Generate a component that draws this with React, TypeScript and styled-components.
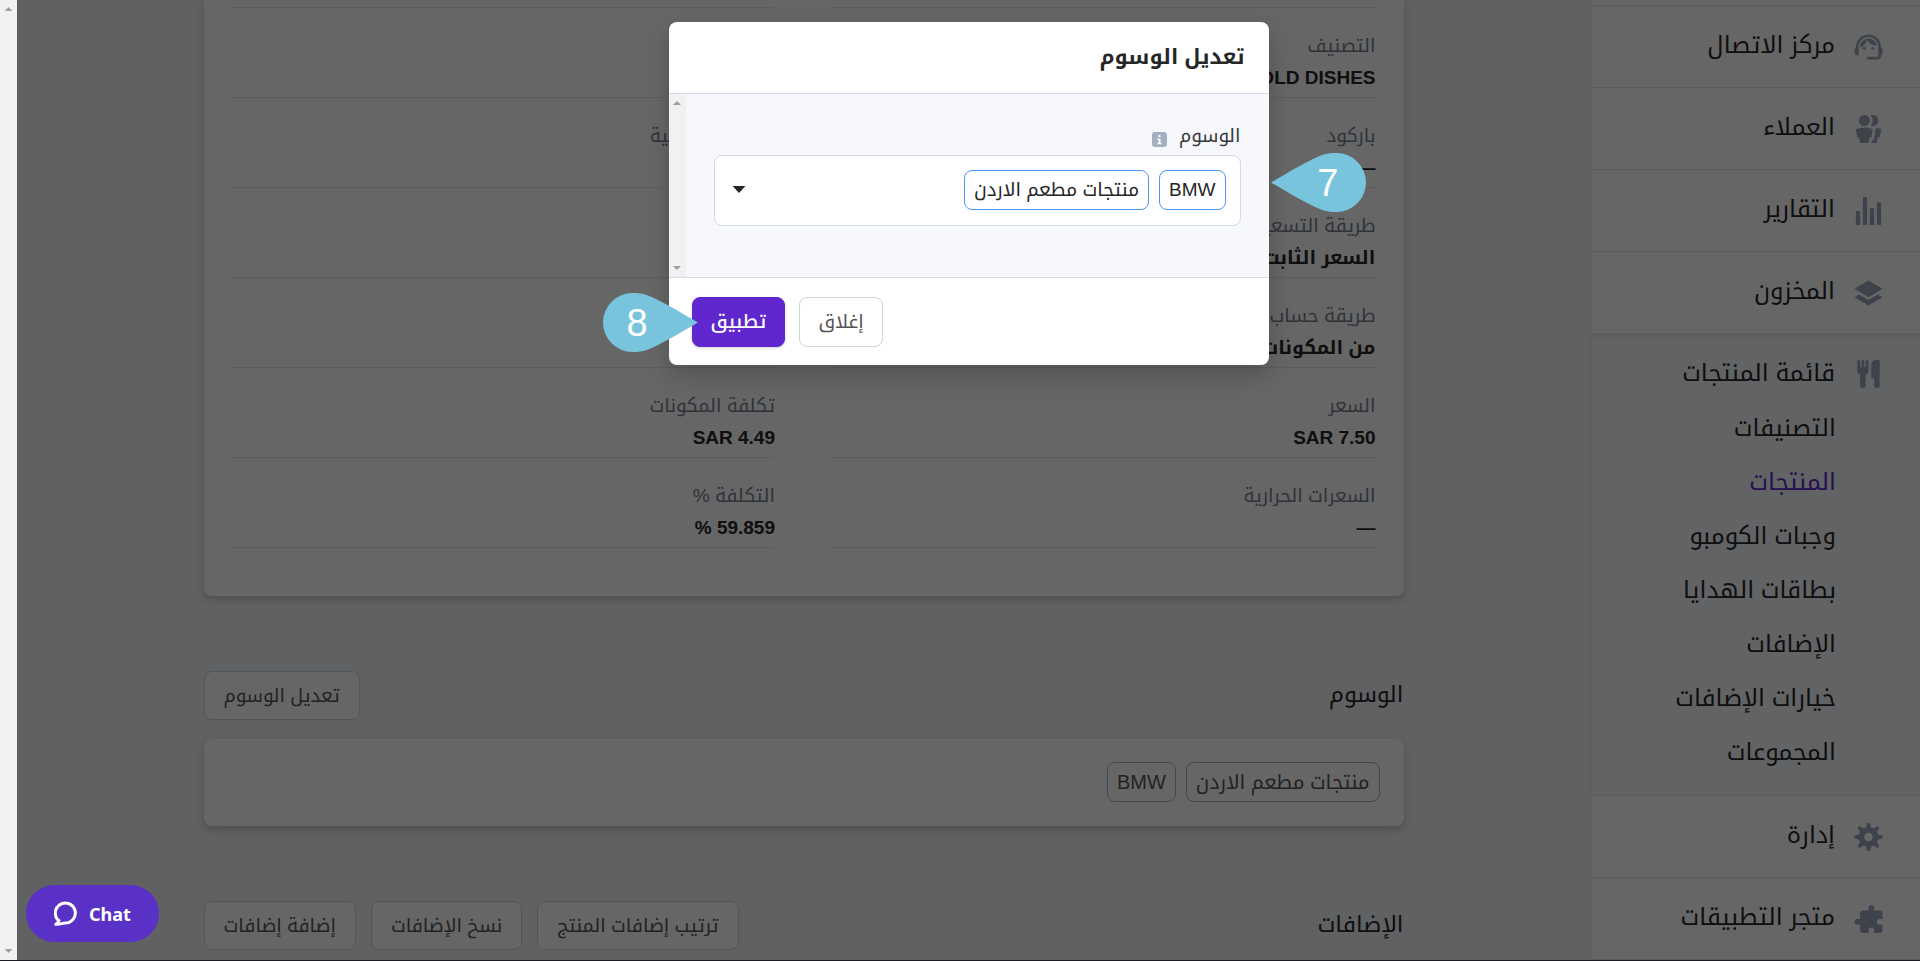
import React from 'react';
import styled, { createGlobalStyle, css } from 'styled-components';

const arabic = `"Liberation Sans", "Noto Kufi Arabic", "DejaVu Sans", sans-serif`;

const GlobalStyle = createGlobalStyle`
  *, *::before, *::after { box-sizing: border-box; }
  body {
    margin: 0;
    background: #f0f2f6;
    color: #262626;
    font-family: ${arabic};
    font-size: 19px;
    line-height: 32px;
  }
  button { font: inherit; cursor: pointer; }
  h2, dl, dd, dt, ul { margin: 0; padding: 0; font-weight: 400; }
  ul { list-style: none; }
  a { color: inherit; text-decoration: none; }
`;

/* ---------- page frame ---------- */

const Page = styled.div`
  position: relative;
  display: flex;
  height: 100vh;
  overflow: hidden;
  border-bottom: 1px solid #1c1a22;
`;

const Sidebar = styled.nav`
  flex: 0 0 330px;
  background: #fff;
  border-left: 1px solid #e2e5ec;
`;

const Main = styled.main`
  flex: 1;
  min-width: 0;
  display: flex;
  flex-direction: column;
  align-items: center;
`;

const Content = styled.div`
  width: 100%;
  max-width: 1200px;
`;

const ScrollTrack = styled.div`
  flex: 0 0 17px;
  display: flex;
  flex-direction: column;
  justify-content: space-between;
  align-items: center;
  padding: 7px 0;
  background: #f1f1f1;
`;

const ScrollArrow = styled.span<{ $down?: boolean }>`
  width: 8px;
  height: 4px;
  background: #a0a0a0;
  clip-path: ${p => (p.$down ? 'polygon(0 0, 100% 0, 50% 100%)' : 'polygon(50% 0, 100% 100%, 0 100%)')};
`;

/* ---------- sidebar ---------- */

const MenuEdge = styled.div`
  height: 6px;
  border-bottom: 1px solid #e6e8ed;
`;

const MenuLink = styled.a<{ $open?: boolean }>`
  display: flex;
  align-items: center;
  gap: 19px;
  padding: 0 37px;
  height: 82px;
  font-size: 24px;
  white-space: nowrap;
  border-bottom: 1px solid #e6e8ed;
  ${p => p.$open && css`
    height: 54px;
    border-bottom: 0;
  `}
`;

const MenuText = styled.span`
  padding-bottom: 3px;
`;

const MenuIcon = styled.svg`
  width: 29px;
  height: 28px;
  fill: #98a6bc;
`;

const MenuGroup = styled.div`
  padding: 13px 0 16px;
  background: #f5f7fa;
  border-bottom: 1px solid #e6e8ed;
  box-shadow: inset 0 4px 6px -2px rgba(0, 0, 0, 0.08);
`;

const SubLink = styled.a<{ $active?: boolean }>`
  display: flex;
  align-items: center;
  height: 54px;
  padding-right: 84px;
  font-size: 24px;
  white-space: nowrap;
  color: ${p => (p.$active ? '#5f28cd' : 'inherit')};
`;

/* ---------- content ---------- */

const Card = styled.section<{ $cut?: boolean }>`
  background: #fff;
  border-radius: ${p => (p.$cut ? '0 0 8px 8px' : '8px')};
  box-shadow: 0 4px 8px rgba(40, 45, 60, 0.22);
`;

const Details = styled(Card)`
  display: grid;
  grid-template-columns: 1fr 1fr;
  column-gap: 57px;
  padding: 7px 28px 48px;
`;

const FieldColumn = styled.dl`
  border-top: 1px solid #e6e8ed;
`;

const Field = styled.div`
  height: 90px;
  padding-top: 22px;
  border-bottom: 1px solid #e6e8ed;
`;

const FieldLabel = styled.dt`
  color: #768092;
`;

const FieldValue = styled.dd`
  font-weight: 700;
`;

const SectionHead = styled.header`
  display: flex;
  align-items: center;
  justify-content: space-between;
  margin: 75px 0 19px;
`;

const SectionTitle = styled.h2`
  padding-bottom: 4px;
  font-size: 23px;
`;

const Actions = styled.div`
  display: flex;
  gap: 15px;
`;

const Button = styled.button<{ $primary?: boolean }>`
  min-height: 49px;
  padding: 0 19px;
  border: 1px solid ${p => (p.$primary ? '#5f27cd' : '#cbd5e0')};
  border-radius: 8px;
  background: ${p => (p.$primary ? '#5f27cd' : '#fff')};
  color: ${p => (p.$primary ? '#fff' : '#555')};
  font-weight: ${p => (p.$primary ? 500 : 400)};
  ${p => p.$primary && css`
    box-shadow: 0 1px 3px rgba(0, 0, 0, 0.2);
  `}
`;

const TagCard = styled(Card)`
  display: flex;
  gap: 10px;
  padding: 23px 24px 24px;
`;

const Tag = styled.span<{ $selected?: boolean }>`
  height: 40px;
  line-height: 38px;
  padding: 0 9px;
  border: 1px solid ${p => (p.$selected ? '#4c97f5' : '#a0aec8')};
  border-radius: 8px;
  color: ${p => (p.$selected ? '#262626' : '#555')};
  font-size: ${p => (p.$selected ? '19px' : '20px')};
`;

/* ---------- modal ---------- */

const Overlay = styled.div`
  position: absolute;
  inset: 0 0 0 17px;
  display: flex;
  justify-content: center;
  align-items: flex-start;
  padding-top: 22px;
  background: rgba(0, 0, 0, 0.6);
`;

const Dialog = styled.div`
  position: relative;
  width: 600px;
  background: #fff;
  border-radius: 8px;
  box-shadow: 0 10px 24px rgba(0, 0, 0, 0.2);
`;

const DialogHead = styled.header`
  height: 72px;
  padding: 19px 24px;
  border-bottom: 1px solid #d5d9e8;
`;

const DialogTitle = styled.h2`
  font-size: 21px;
  font-weight: 700;
`;

const DialogBody = styled.div`
  display: flex;
  height: 184px;
  background: #f7f8fc;
  border-bottom: 1px solid #d5d9e8;
`;

const Form = styled.div`
  flex: 1;
  padding: 26px 28px 0;
`;

const LabelRow = styled.div`
  display: flex;
  align-items: center;
  gap: 12px;
  height: 35px;
`;

const FormLabel = styled.label`
  padding-bottom: 4px;
  color: #3a3a3a;
`;

const InfoIcon = styled.svg`
  width: 15px;
  height: 15px;
  margin-top: 4px;
`;

const Combo = styled.button`
  display: flex;
  align-items: center;
  gap: 10px;
  width: 100%;
  height: 71px;
  padding: 0 14px 2px 18px;
  background: #fff;
  border: 1px solid #d5d9e8;
  border-radius: 8px;
`;

const Caret = styled.span`
  width: 13px;
  height: 7px;
  margin-inline-start: auto;
  background: #262626;
  clip-path: polygon(0 0, 100% 0, 50% 100%);
`;

const DialogFoot = styled.footer`
  display: flex;
  justify-content: flex-end;
  gap: 14px;
  height: 87px;
  padding: 19px 23px 18px;

  ${Button} {
    padding: 0 18px;
  }
`;

const Callout = styled.div<{ $side: 'left' | 'right' }>`
  position: absolute;
  width: 95px;
  height: 59px;
  top: ${p => (p.$side === 'right' ? '131px' : '271px')};
  left: ${p => (p.$side === 'right' ? '602px' : '-66px')};
  display: flex;
  align-items: center;
  justify-content: ${p => (p.$side === 'right' ? 'flex-end' : 'flex-start')};
  padding: 0 27px 0 24px;
  color: #fff;
  font-size: 38px;
`;

const CalloutShape = styled.svg<{ $flip?: boolean }>`
  position: absolute;
  inset: 0;
  fill: #79c4dd;
  transform: ${p => (p.$flip ? 'scaleX(-1)' : 'none')};
`;

const CalloutNumber = styled.span`
  position: relative;
`;

const Chat = styled.button`
  position: absolute;
  left: 26px;
  bottom: 18px;
  display: flex;
  align-items: center;
  gap: 11px;
  height: 57px;
  padding: 0 28px;
  border: 0;
  border-radius: 29px;
  background: #5a31c6;
  color: #fff;
  font-family: "Noto Sans", sans-serif;
  font-size: 18px;
  font-weight: 700;
`;

/* ---------- data ---------- */

const icons = {
  users:
    'M7 8a4 4 0 1 1 0-8 4 4 0 0 1 0 8zm0 1c2.15 0 4.2.4 6.1 1.09L12 16h-1.25L10 20H4l-.75-4H2L.9 10.09A17.93 17.93 0 0 1 7 9zm8.31.17c1.32.18 2.59.48 3.8.92L18 16h-1.25L16 20h-3.96l.37-2h1.25l1.65-8.83zM13 0a4 4 0 1 1-1.33 7.76 5.96 5.96 0 0 0 0-7.52C12.1.1 12.53 0 13 0z',
  chart: 'M1 10h3v10H1V10zM6 0h3v20H6V0zm5 8h3v12h-3V8zm5-4h3v16h-3V4z',
  layers: 'M10 1l10 6-10 6L0 7l10-6zm6.67 10L20 13l-10 6-10-6 3.33-2L10 15l6.67-4z',
  food:
    'M18 11v7a2 2 0 0 1-4 0v-5h-2V3a3 3 0 0 1 3-3h3v11zM4 10a2 2 0 0 1-2-2V1a1 1 0 0 1 2 0v4h1V1a1 1 0 0 1 2 0v4h1V1a1 1 0 0 1 2 0v7a2 2 0 0 1-2 2v8a2 2 0 0 1-4 0v-8z',
  cog:
    'M3.94 6.5L2.22 3.64l1.42-1.42L6.5 3.94c.52-.3 1.1-.54 1.7-.7L9 0h2l.8 3.24c.6.16 1.18.4 1.7.7l2.86-1.72 1.42 1.42-1.72 2.86c.3.52.54 1.1.7 1.7L20 9v2l-3.24.8c-.16.6-.4 1.18-.7 1.7l1.72 2.86-1.42 1.42-2.86-1.72c-.52.3-1.1.54-1.7.7L11 20H9l-.8-3.24c-.6-.16-1.18-.4-1.7-.7l-2.86 1.72-1.42-1.42 1.72-2.86c-.3-.52-.54-1.1-.7-1.7L0 11V9l3.24-.8c.16-.6.4-1.18.7-1.7zM10 13a3 3 0 1 0 0-6 3 3 0 0 0 0 6z',
  plugin:
    'M20 14v4a2 2 0 0 1-2 2h-4v-2a2 2 0 0 0-2-2 2 2 0 0 0-2 2v2H6a2 2 0 0 1-2-2v-4H2a2 2 0 0 1-2-2 2 2 0 0 1 2-2h2V6c0-1.1.9-2 2-2h4V2a2 2 0 0 1 2-2 2 2 0 0 1 2 2v2h4a2 2 0 0 1 2 2v4h-2a2 2 0 0 0-2 2 2 2 0 0 0 2 2h2z',
};

const subItems = [
  'التصنيفات',
  'المنتجات',
  'وجبات الكومبو',
  'بطاقات الهدايا',
  'الإضافات',
  'خيارات الإضافات',
  'المجموعات',
];

const rightFields = [
  ['التصنيف', 'COLD DISHES'],
  ['باركود', '—'],
  ['طريقة التسعير', 'السعر الثابت'],
  ['طريقة حساب التكلفة', 'من المكونات'],
  ['السعر', 'SAR 7.50'],
  ['السعرات الحرارية', '—'],
];

const leftFields = [
  ['', ''],
  ['النسبة الضريبية', ''],
  ['', ''],
  ['', ''],
  ['تكلفة المكونات', 'SAR 4.49'],
  ['التكلفة %', '59.859 %'],
];

function Glyph({ name }: { name: keyof typeof icons }) {
  return (
    <MenuIcon viewBox="0 0 20 20" aria-hidden="true">
      <path d={icons[name]} fillRule="evenodd" />
    </MenuIcon>
  );
}

function AgentGlyph() {
  return (
    <MenuIcon viewBox="2 2 20 20" aria-hidden="true">
      <path d="M21 12.22C21 6.73 16.74 3 12 3c-4.69 0-9 3.65-9 9.28-.6.34-1 .98-1 1.72v2c0 1.1.9 2 2 2h1v-6.1c0-3.87 3.13-7 7-7s7 3.13 7 7V19h-8v2h8c1.1 0 2-.9 2-2v-1.22c.59-.31 1-.92 1-1.64v-2.3c0-.7-.41-1.31-1-1.62z" />
      <circle cx="9" cy="13" r="1" />
      <circle cx="15" cy="13" r="1" />
      <path d="M18 11.03C17.52 8.18 15.04 6 12.05 6c-3.03 0-6.29 2.51-6.03 6.45 2.47-1.01 4.33-3.21 4.86-5.89 1.31 2.63 4 4.44 7.12 4.47z" />
    </MenuIcon>
  );
}

function Fields({ items }: { items: string[][] }) {
  return (
    <FieldColumn>
      {items.map(([label, value], i) => (
        <Field key={i}>
          <FieldLabel>{label}</FieldLabel>
          <FieldValue>{value}</FieldValue>
        </Field>
      ))}
    </FieldColumn>
  );
}

function Step({ n, side }: { n: number; side: 'left' | 'right' }) {
  return (
    <Callout $side={side} dir="ltr">
      <CalloutShape $flip={side === 'left'} width="95" height="59" viewBox="0 0 95 59" aria-hidden="true">
        <path d="M0 29.500C20 18 36 8 50 2.500C55 .5 60 0 65.500 0A29.500 29.500 0 0 1 65.500 59C60 59 55 58.500 50 56.500C36 51 20 41 0 29.500Z" />
      </CalloutShape>
      <CalloutNumber>{n}</CalloutNumber>
    </Callout>
  );
}

export default function App() {
  return (
    <>
      <GlobalStyle />
      <Page dir="rtl" lang="ar">
        <Sidebar>
          <MenuEdge />
          <MenuLink href="#call-center"><AgentGlyph /><MenuText>مركز الاتصال</MenuText></MenuLink>
          <MenuLink href="#customers"><Glyph name="users" /><MenuText>العملاء</MenuText></MenuLink>
          <MenuLink href="#reports"><Glyph name="chart" /><MenuText>التقارير</MenuText></MenuLink>
          <MenuLink href="#inventory"><Glyph name="layers" /><MenuText>المخزون</MenuText></MenuLink>
          <MenuGroup>
            <MenuLink href="#menu" $open><Glyph name="food" /><MenuText>قائمة المنتجات</MenuText></MenuLink>
            <ul>
              {subItems.map((item, i) => (
                <li key={item}><SubLink href="#menu" $active={i === 1}>{item}</SubLink></li>
              ))}
            </ul>
          </MenuGroup>
          <MenuLink href="#manage"><Glyph name="cog" /><MenuText>إدارة</MenuText></MenuLink>
          <MenuLink href="#apps"><Glyph name="plugin" /><MenuText>متجر التطبيقات</MenuText></MenuLink>
        </Sidebar>

        <Main>
          <Content>
            <Details $cut>
              <Fields items={rightFields} />
              <Fields items={leftFields} />
            </Details>

            <SectionHead>
              <SectionTitle>الوسوم</SectionTitle>
              <Button type="button">تعديل الوسوم</Button>
            </SectionHead>
            <TagCard>
              <Tag>منتجات مطعم الاردن</Tag>
              <Tag>BMW</Tag>
            </TagCard>

            <SectionHead>
              <SectionTitle>الإضافات</SectionTitle>
              <Actions>
                <Button type="button">ترتيب إضافات المنتج</Button>
                <Button type="button">نسخ الإضافات</Button>
                <Button type="button">إضافة إضافات</Button>
              </Actions>
            </SectionHead>
          </Content>
        </Main>

        <ScrollTrack>
          <ScrollArrow />
          <ScrollArrow $down />
        </ScrollTrack>

        <Overlay>
          <Dialog role="dialog" aria-labelledby="dialog-title">
            <DialogHead>
              <DialogTitle id="dialog-title">تعديل الوسوم</DialogTitle>
            </DialogHead>
            <DialogBody>
              <Form>
                <LabelRow>
                  <FormLabel htmlFor="tags">الوسوم</FormLabel>
                  <InfoIcon viewBox="0 0 15 15" aria-hidden="true">
                    <rect width="15" height="15" rx="3" fill="#a3b0c2" />
                    <path d="M6.500 3h2v2h-2zM5.500 6.500h3V11h1v1.200h-4V11h1V7.700h-1z" fill="#fff" />
                  </InfoIcon>
                </LabelRow>
                <Combo id="tags" type="button" aria-haspopup="listbox">
                  <Tag $selected>BMW</Tag>
                  <Tag $selected>منتجات مطعم الاردن</Tag>
                  <Caret />
                </Combo>
              </Form>
              <ScrollTrack>
                <ScrollArrow />
                <ScrollArrow $down />
              </ScrollTrack>
            </DialogBody>
            <DialogFoot>
              <Button type="button">إغلاق</Button>
              <Button type="button" $primary>تطبيق</Button>
            </DialogFoot>
            <Step n={7} side="right" />
            <Step n={8} side="left" />
          </Dialog>
        </Overlay>

        <Chat type="button" dir="ltr">
          <svg width="24" height="25" viewBox="0 0 24 25" fill="none" stroke="#fff" strokeWidth="3" strokeLinejoin="round" aria-hidden="true">
            <path d="M6 20.500A10 10 0 1 1 10.500 22C8 22.500 5 23.500 1.800 23.300C4 22 5 21 4.500 18.500" />
          </svg>
          Chat
        </Chat>
      </Page>
    </>
  );
}
